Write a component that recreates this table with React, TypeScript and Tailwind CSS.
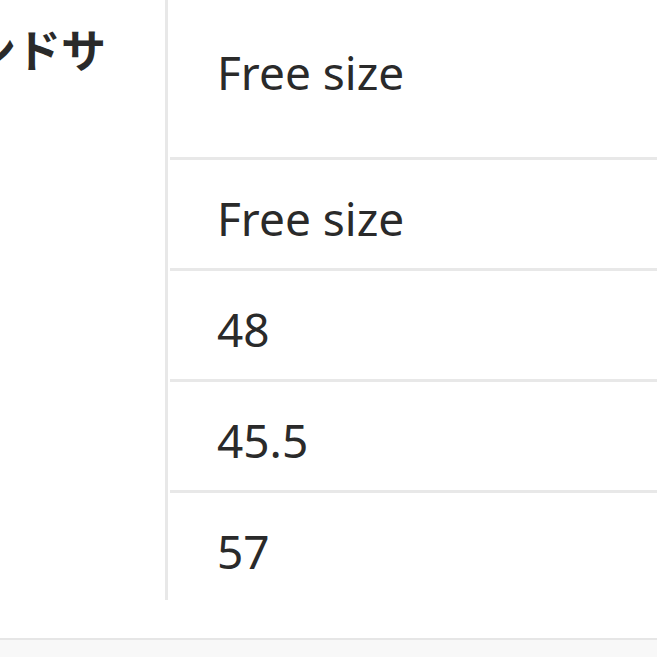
export default function App() {
  const rows = ['Free size', '48', '45.5', '57']

  return (
    <div className="h-[657px] w-[657px] overflow-hidden bg-white flex flex-col text-[#2a2a2a] font-['Noto_Sans','Noto_Sans_CJK_JP',sans-serif]">
      <div className="flex h-[600px] shrink-0">
        <div className="w-[165px] shrink-0 overflow-hidden pt-[28px]">
          <div className="ml-[-119px] whitespace-nowrap text-[45px] leading-none font-bold">
            ブランドサ
          </div>
        </div>
        <div className="w-[3px] shrink-0 bg-[#e8e8e8]" />
        <div className="flex-1 flex flex-col ml-[2px]">
          <div className="h-[160px] shrink-0 border-b-[3px] border-[#e8e8e8] flex items-center pl-[47px] pb-[14px] text-[46px] leading-none">
            Free size
          </div>
          {rows.map((r, i) => (
            <div
              key={i}
              className={
                i < rows.length - 1
                  ? 'h-[111px] shrink-0 border-b-[3px] border-[#e8e8e8] flex items-center pl-[47px] pt-[8px] text-[46px] leading-none'
                  : 'flex-1 flex items-center pl-[47px] pt-[8px] text-[46px] leading-none'
              }
            >
              {r}
            </div>
          ))}
        </div>
      </div>
      <div className="h-[38px] shrink-0" />
      <div className="flex-1 border-t-2 border-[#e6e6e6] bg-[#f8f8f8]" />
    </div>
  )
}
